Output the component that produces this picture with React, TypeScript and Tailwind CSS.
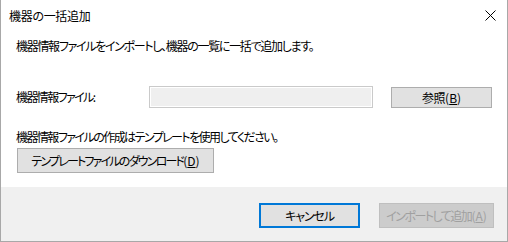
import React from "react";

const font =
  "font-['Yu_Gothic_UI','Noto_Sans_CJK_JP',sans-serif] [font-feature-settings:'palt']";

const Key = ({ k }: { k: string }) => (
  <span className="tracking-normal">
    (<span className="underline">{k}</span>)
  </span>
);

export default function App() {
  return (
    <div className={`w-[508px] h-[242px] bg-white border-l border-r border-b border-[#a8a8a8] text-[12px] leading-[16px] text-black flex flex-col ${font}`}>
      {/* title bar */}
      <div className="h-[32px] flex items-center justify-between pl-[8px] pr-[11px] shrink-0">
        <span className="tracking-[-0.3px]">機器の一括追加</span>
        <svg width="11" height="11" viewBox="0 0 11 11" className="mt-[-1px]">
          <path d="M0.5 0.5 L10.5 10.5 M10.5 0.5 L0.5 10.5" stroke="#000" strokeWidth="1" />
        </svg>
      </div>

      {/* body */}
      <div className="h-[155px] px-[15px] pt-[6px] shrink-0">
        <p className="whitespace-nowrap tracking-[-1.3px]">機器情報ファイルをインポートし、機器の一覧に一括で追加します。</p>

        <div className="mt-[32px] h-[22px] flex items-center">
          <span className="w-[133px] whitespace-nowrap tracking-[-1.6px]">機器情報ファイル:</span>
          <div className="w-[225px] h-[22px] border border-[#cacaca] p-px bg-white">
            <div className="w-full h-full bg-[#efefef]" />
          </div>
          <button className="ml-[18px] w-[101px] h-[21px] mt-[1px] bg-[#e1e1e1] border border-[#adadad] whitespace-nowrap tracking-[-0.5px]">
            参照<Key k="B" />
          </button>
        </div>

        <p className="mt-[21px] whitespace-nowrap tracking-[-1.55px]">機器情報ファイルの作成はテンプレートを使用してください。</p>
        <button className="mt-[3px] ml-px w-[197px] h-[25px] bg-[#e1e1e1] border border-[#adadad] whitespace-nowrap tracking-[-1.8px]">
          テンプレートファイルのダウンロード<Key k="D" />
        </button>
      </div>

      {/* footer */}
      <div className="flex-1 bg-[#f0f0f0] flex justify-end items-start pt-[16px] pr-[13px] gap-[19px]">
        <button className="w-[101px] h-[25px] bg-[#e1e1e1] border-2 border-[#0078d7] whitespace-nowrap tracking-[-1.1px]">
          キャンセル
        </button>
        <button className="w-[115px] h-[25px] bg-[#cccccc] border border-[#bfbfbf] text-[#a0a0a0] whitespace-nowrap tracking-[-1.5px]" disabled>
          インポートして追加<Key k="A" />
        </button>
      </div>
    </div>
  );
}
